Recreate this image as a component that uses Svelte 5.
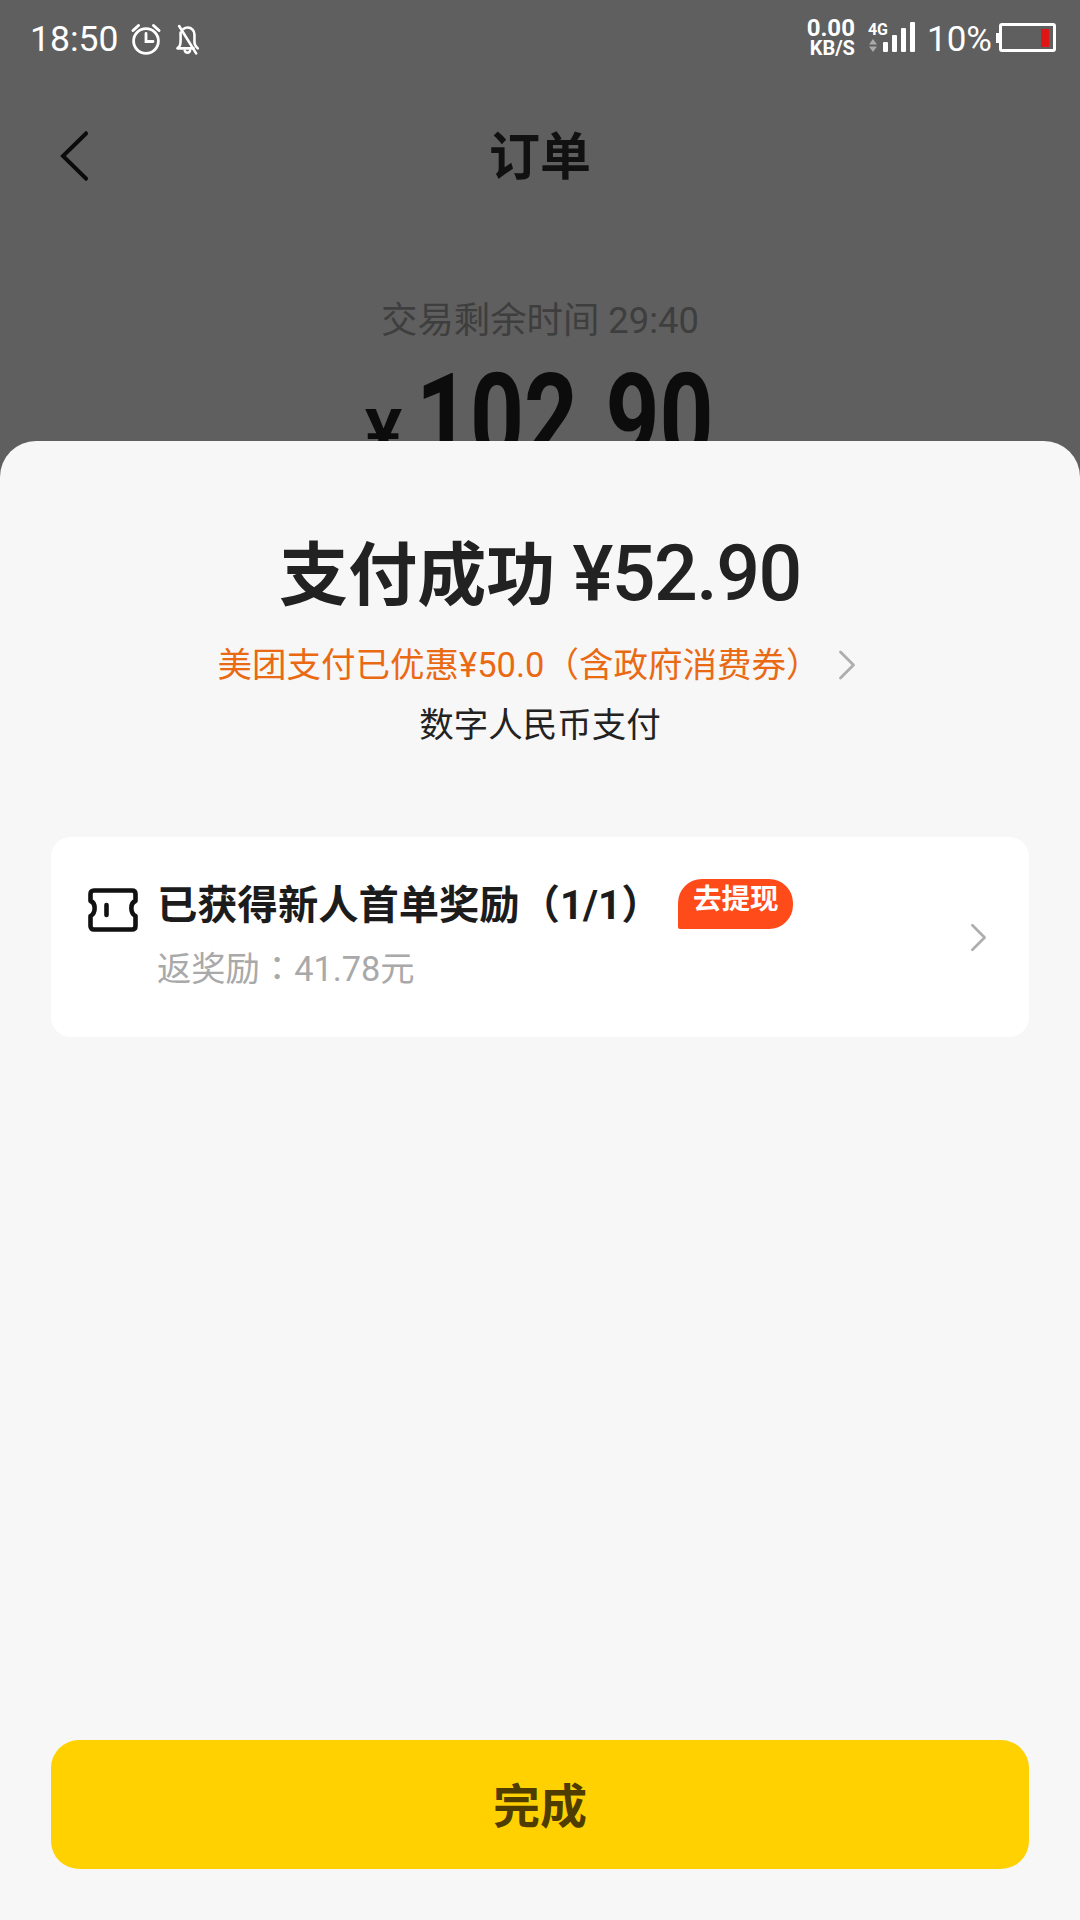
<script>
  const signal = [10, 17, 24, 30];
</script>

<div class="screen">
  <div class="behind">
    <div class="status">
      <span class="time">18:50</span>
      <svg class="st-icon alarm" viewBox="0 0 32 32" fill="none" stroke="#fff" stroke-width="2.8" stroke-linecap="round">
        <circle cx="16" cy="18" r="12.4" />
        <path d="M16 10.5V18.5H23" />
        <path d="M3 7.5L8.5 2.5M29 7.5L23.5 2.5" stroke-width="3" />
      </svg>
      <svg class="st-icon bell" viewBox="0 0 26 32" fill="none" stroke="#fff" stroke-width="2.8" stroke-linecap="round" stroke-linejoin="round">
        <path d="M5 8.5C4.8 11 5.4 18 4.6 21.5C4.2 23.4 2.8 24.2 1.6 25.6H19" />
        <path d="M8 4.6C9.2 3.6 11 3 12.6 3C17 3 20 6.4 20 10.6V19C20 21.6 21.4 23.6 23.6 25.6" />
        <path d="M9.5 28C10 29.6 11 30.2 12.4 30.2C13.8 30.2 14.8 29.6 15.2 28" />
        <path d="M3.4 1.4L21.8 31" />
      </svg>
      <span class="grow"></span>
      <div class="speed"><b>0.00</b><b class="unit">KB/S</b></div>
      <div class="net">
        <div class="net-l">
          <b>4G</b>
          <svg class="arrows" viewBox="0 0 8 13" fill="#aaa"><path d="M4 0L8 5.5H0Z" /><path d="M0 7.5H8L4 13Z" /></svg>
        </div>
        <div class="bars">
          {#each signal as h}
            <i style="height:{h}px"></i>
          {/each}
        </div>
      </div>
      <span class="pct">10%</span>
      <div class="battery"><i class="tip"></i><div class="cell"><i class="level"></i></div></div>
    </div>

    <div class="nav">
      <svg class="back" viewBox="0 0 28 50" fill="none" stroke="#0b0b0b" stroke-width="4" stroke-linecap="square">
        <path d="M26 2.5L3 25L26 47.5" />
      </svg>
      <div class="nav-title">订单</div>
    </div>

    <div class="remain">交易剩余时间 29:40</div>
    <div class="amount"><span class="yen">¥</span><span class="big">102.90</span></div>
  </div>

  <div class="sheet">
    <h1>支付成功 <span class="paid">¥52.90</span></h1>
    <div class="promo">
      <span>美团支付已优惠¥50.0（含政府消费券）</span>
      <svg class="chev promo-chev" viewBox="0 0 18 30" fill="none" stroke="#aeaeae" stroke-width="2.8" stroke-linecap="round" stroke-linejoin="round">
        <path d="M2.5 2L15.5 15L2.5 28" />
      </svg>
    </div>
    <div class="method">数字人民币支付</div>

    <div class="card">
      <svg class="ticket" viewBox="0 0 50 44" fill="none" stroke="#111" stroke-width="4.6" stroke-linejoin="round">
        <path d="M6 2.5H44Q47.5 2.5 47.5 6V13C42 15 42 25 47.5 28V38Q47.5 41.5 44 41.5H6Q2.5 41.5 2.5 38V28C8 25 8 15 2.5 13V6Q2.5 2.5 6 2.5Z" />
        <path d="M18.5 17V27" stroke-linecap="round" />
      </svg>
      <div class="card-body">
        <div class="card-title">
          <span>已获得新人首单奖励（1/1）</span>
          <span class="tag">去提现</span>
        </div>
        <div class="card-sub">返奖励<span class="colon">：</span>41.78元</div>
      </div>
      <svg class="chev card-chev" viewBox="0 0 18 30" fill="none" stroke="#aeaeae" stroke-width="2.8" stroke-linecap="round" stroke-linejoin="round">
        <path d="M2.5 2L15.5 15L2.5 28" />
      </svg>
    </div>

    <div class="grow"></div>
    <button class="done">完成</button>
  </div>
</div>

<style>
  :global(body) { margin: 0; }
  .screen {
    position: relative; width: 1080px; height: 1920px; overflow: hidden;
    background: #5f5f5f;
    font-family: Roboto, "Noto Sans CJK SC", sans-serif;
  }
  .grow { flex: 1; }

  .behind { height: 441px; overflow: hidden; }
  .status { display: flex; align-items: center; height: 78px; padding: 0 24px 0 30px; color: #fff; }
  .time { font-size: 35.5px; }
  .st-icon { display: block; }
  .alarm { width: 32px; height: 32px; margin-left: 12px; }
  .bell { width: 24px; height: 31px; margin-left: 14px; }
  .speed { display: flex; flex-direction: column; align-items: flex-end; margin: 0 13px 3px 0; }
  .speed b { font-size: 24px; line-height: 21px; }
  .speed .unit { font-size: 20px; line-height: 18px; }
  .net { display: flex; align-items: flex-end; margin: 0 12px 4px 0; }
  .net-l { display: flex; flex-direction: column; align-items: center; margin-right: -5px; }
  .net-l b { font-size: 16px; line-height: 15px; }
  .arrows { width: 8px; height: 13px; margin: 2px 9px 0 0; }
  .bars { display: flex; align-items: flex-end; gap: 4px; }
  .bars i { display: block; width: 5px; background: #fff; border-radius: 1px; }
  .pct { font-size: 35px; margin-right: 4px; }
  .battery { display: flex; align-items: center; margin-bottom: 3px; }
  .tip { display: block; width: 3px; height: 10px; background: #fff; }
  .cell {
    display: flex; justify-content: flex-end; align-items: center;
    box-sizing: border-box; width: 57px; height: 29px; padding-right: 4px;
    border: 3px solid #fff; border-radius: 3px;
  }
  .level { display: block; width: 8px; height: 18px; background: #e01616; }

  .nav { position: relative; height: 156px; box-sizing: border-box; padding-bottom: 7px; display: flex; align-items: center; justify-content: center; }
  .back { position: absolute; left: 60px; top: 53px; width: 28px; height: 50px; }
  .nav-title { font-size: 51px; font-weight: 700; color: #111; }

  .remain { margin-top: 62px; text-align: center; font-size: 36.4px; line-height: 50px; color: #3e3e3e; }
  .amount { display: flex; justify-content: center; align-items: baseline; margin-top: 12px; color: #0c0c0c; font-weight: 700; }
  .yen { font-size: 70px; margin-right: 14px; }
  /* the original digits are a narrow DIN-like face, so squeeze Roboto */
  .big { display: inline-block; font-size: 120px; line-height: 120px; transform: scaleX(0.785); transform-origin: left; margin-right: -80px; }

  .sheet {
    position: absolute; left: 0; right: 0; top: 441px; bottom: 0;
    display: flex; flex-direction: column; align-items: center;
    background: #f7f7f7; border-radius: 36px 36px 0 0;
    padding: 0 51px 51px;
  }
  h1 { margin: 90px 0 0; font-size: 69px; line-height: 86px; font-weight: 700; color: #222; white-space: nowrap; }
  .paid { font-size: 77px; font-weight: 500; letter-spacing: -1.5px; }
  .promo { display: flex; align-items: center; gap: 18px; margin: 21px 6px 0 0; font-size: 34.5px; line-height: 48px; color: #ea6a14; }
  .promo-chev { width: 18px; height: 30px; flex: none; }
  .method { margin-top: 11px; font-size: 34.5px; line-height: 50px; color: #222; }

  .card {
    align-self: stretch; display: flex; align-items: center;
    margin-top: 87px; height: 200px; box-sizing: border-box; padding: 0 42px 0 37px;
    background: #fff; border-radius: 20px;
  }
  .ticket { width: 50px; height: 44px; flex: none; margin-bottom: 54px; }
  .card-body { flex: 1; margin: -4px 0 0 19px; }
  .card-title { display: flex; align-items: flex-start; font-size: 40.3px; line-height: 56px; font-weight: 700; color: #1c1c1c; }
  .tag {
    margin: 1px 0 0 17px; padding: 0 14.5px; height: 50px;
    font-size: 28.5px; line-height: 42px; color: #fff;
    background: #ff4a1a; border-radius: 24px 24px 24px 2px;
  }
  .card-sub { margin-top: 8px; font-size: 34.3px; line-height: 48px; color: #a9a9a9; }
  .colon { font-family: "Noto Sans CJK TC", sans-serif; }
  .card-chev { width: 17px; height: 29px; flex: none; }

  .done {
    align-self: stretch; height: 129px; padding: 0 0 5px; border: none; border-radius: 28px;
    background: #ffd100; color: #4f3c00;
    font-family: inherit; font-size: 47px; font-weight: 700;
  }
</style>
